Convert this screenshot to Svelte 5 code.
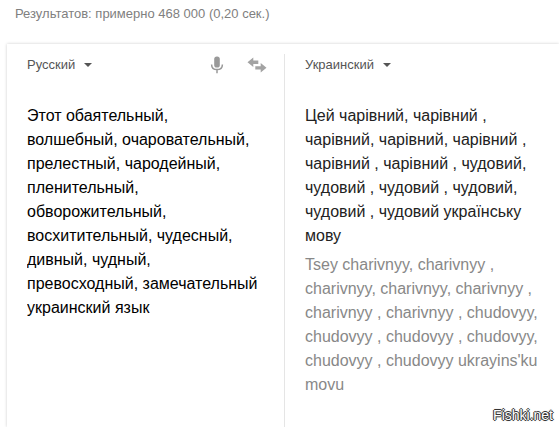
<script>
  const languages = ['Русский', 'Украинский', 'Английский'];
  let from = $state('Русский');
  let to = $state('Украинский');
  let source = $state(
    'Этот обаятельный, волшебный, очаровательный, прелестный, чародейный, пленительный, обворожительный, восхитительный, чудесный, дивный, чудный, превосходный, замечательный украинский язык'
  );
  const translation =
    'Цей чарівний, чарівний , чарівний, чарівний, чарівний , чарівний , чарівний , чудовий, чудовий , чудовий , чудовий, чудовий , чудовий українську мову';
  const translit =
    "Tsey charivnyy, charivnyy , charivnyy, charivnyy, charivnyy , charivnyy , charivnyy , chudovyy, chudovyy , chudovyy , chudovyy, chudovyy , chudovyy ukrayins'ku movu";

  function swap() {
    [from, to] = [to, from];
  }
</script>

{#snippet caret()}
  <svg class="caret" width="8" height="4" viewBox="0 0 8 4" aria-hidden="true">
    <path d="M0 0h8L4 4z" fill="#555" />
  </svg>
{/snippet}

<div class="page">
  <p class="stats">Результатов: примерно 468 000 (0,20 сек.)</p>

  <main class="card">
    <section class="pane source">
      <header>
        <div class="picker">
          <select bind:value={from} aria-label="Исходный язык">
            {#each languages as name}<option>{name}</option>{/each}
          </select>
          {@render caret()}
        </div>
        <div class="tools">
          <button type="button" aria-label="Голосовой ввод">
            <svg width="14" height="18" viewBox="0 0 14 18" aria-hidden="true">
              <rect x="4.2" y="0.5" width="5.6" height="11" rx="2.6" fill="#999" />
              <path d="M1.6 8.4C1.6 11.8 4 13.6 7 13.6s5.4-1.8 5.4-5.2M7 13.6V17.2" fill="none" stroke="#999" stroke-width="1.5" />
            </svg>
          </button>
          <button type="button" aria-label="Поменять языки местами" onclick={swap}>
            <svg width="20" height="16" viewBox="0 0 20 16" aria-hidden="true">
              <path d="M0.5 5.2L6.3 0.4V3.6H11.3V6.9H6.3V10ZM19.5 10.8L13.7 6V9.2H8.3V12.5H13.7V15.6Z" fill="#a3a3a3" />
            </svg>
          </button>
        </div>
      </header>
      <textarea bind:value={source} aria-label="Исходный текст" spellcheck="false"></textarea>
    </section>

    <section class="pane target">
      <header>
        <div class="picker">
          <select bind:value={to} aria-label="Язык перевода">
            {#each languages as name}<option>{name}</option>{/each}
          </select>
          {@render caret()}
        </div>
      </header>
      <p class="translation" lang="uk">{translation}</p>
      <p class="translit">{translit}</p>
    </section>
  </main>

  <span class="watermark">Fishki.net</span>
</div>

<style>
  :global(body) {
    background: #fff;
  }

  .page {
    position: relative;
    display: flex;
    flex-direction: column;
    min-height: 100vh;
    overflow: hidden;
    font-family: 'Liberation Sans', Arial, sans-serif;
    font-size: 16px;
    line-height: 24px;
    color: #222;
  }

  p {
    margin: 0;
  }

  .stats {
    padding: 2px 15px 18px;
    font-size: 13px;
    color: #808080;
  }

  .card {
    flex: 1;
    display: grid;
    grid-template-columns: 277fr 275fr;
    margin-left: 7px;
    padding-top: 10px;
    background: #fff;
    box-shadow: 0 0 3px rgba(0, 0, 0, 0.2);
  }

  .pane {
    display: flex;
    flex-direction: column;
    min-width: 0;
    padding: 0 20px;
  }

  .target {
    border-left: 1px solid #e5e5e5;
  }

  .source {
    padding-right: 17px;
  }

  header {
    display: flex;
    align-items: center;
    justify-content: space-between;
    height: 22px;
    margin-bottom: 28px;
  }

  .picker {
    display: flex;
    align-items: center;
  }

  select {
    appearance: none;
    field-sizing: content;
    margin: 0;
    padding: 0 17px 0 0;
    border: 0;
    background: transparent;
    font: inherit;
    font-size: 13px;
    line-height: 22px;
    color: #555;
    cursor: pointer;
  }

  .caret {
    margin-left: -8px;
    pointer-events: none;
  }

  .tools {
    display: flex;
    align-items: center;
    gap: 23px;
  }

  button {
    display: flex;
    padding: 0;
    border: 0;
    background: none;
    cursor: pointer;
  }

  textarea {
    flex: 1;
    margin: 0;
    padding: 0 6px 0 0;
    border: 0;
    outline: 0;
    resize: none;
    overflow: hidden;
    background: transparent;
    font: inherit;
    color: #000;
  }

  .translit {
    margin-top: 5px;
    color: #888;
  }

  .watermark {
    position: absolute;
    right: 6px;
    bottom: 4px;
    font-size: 14px;
    line-height: 16px;
    color: #fff;
    text-shadow:
      0 -1px 0 #333,
      -1px 0 0 #333,
      1px 0 0 #333,
      0 1px 0 #333,
      0 0 2px #666;
  }
</style>
